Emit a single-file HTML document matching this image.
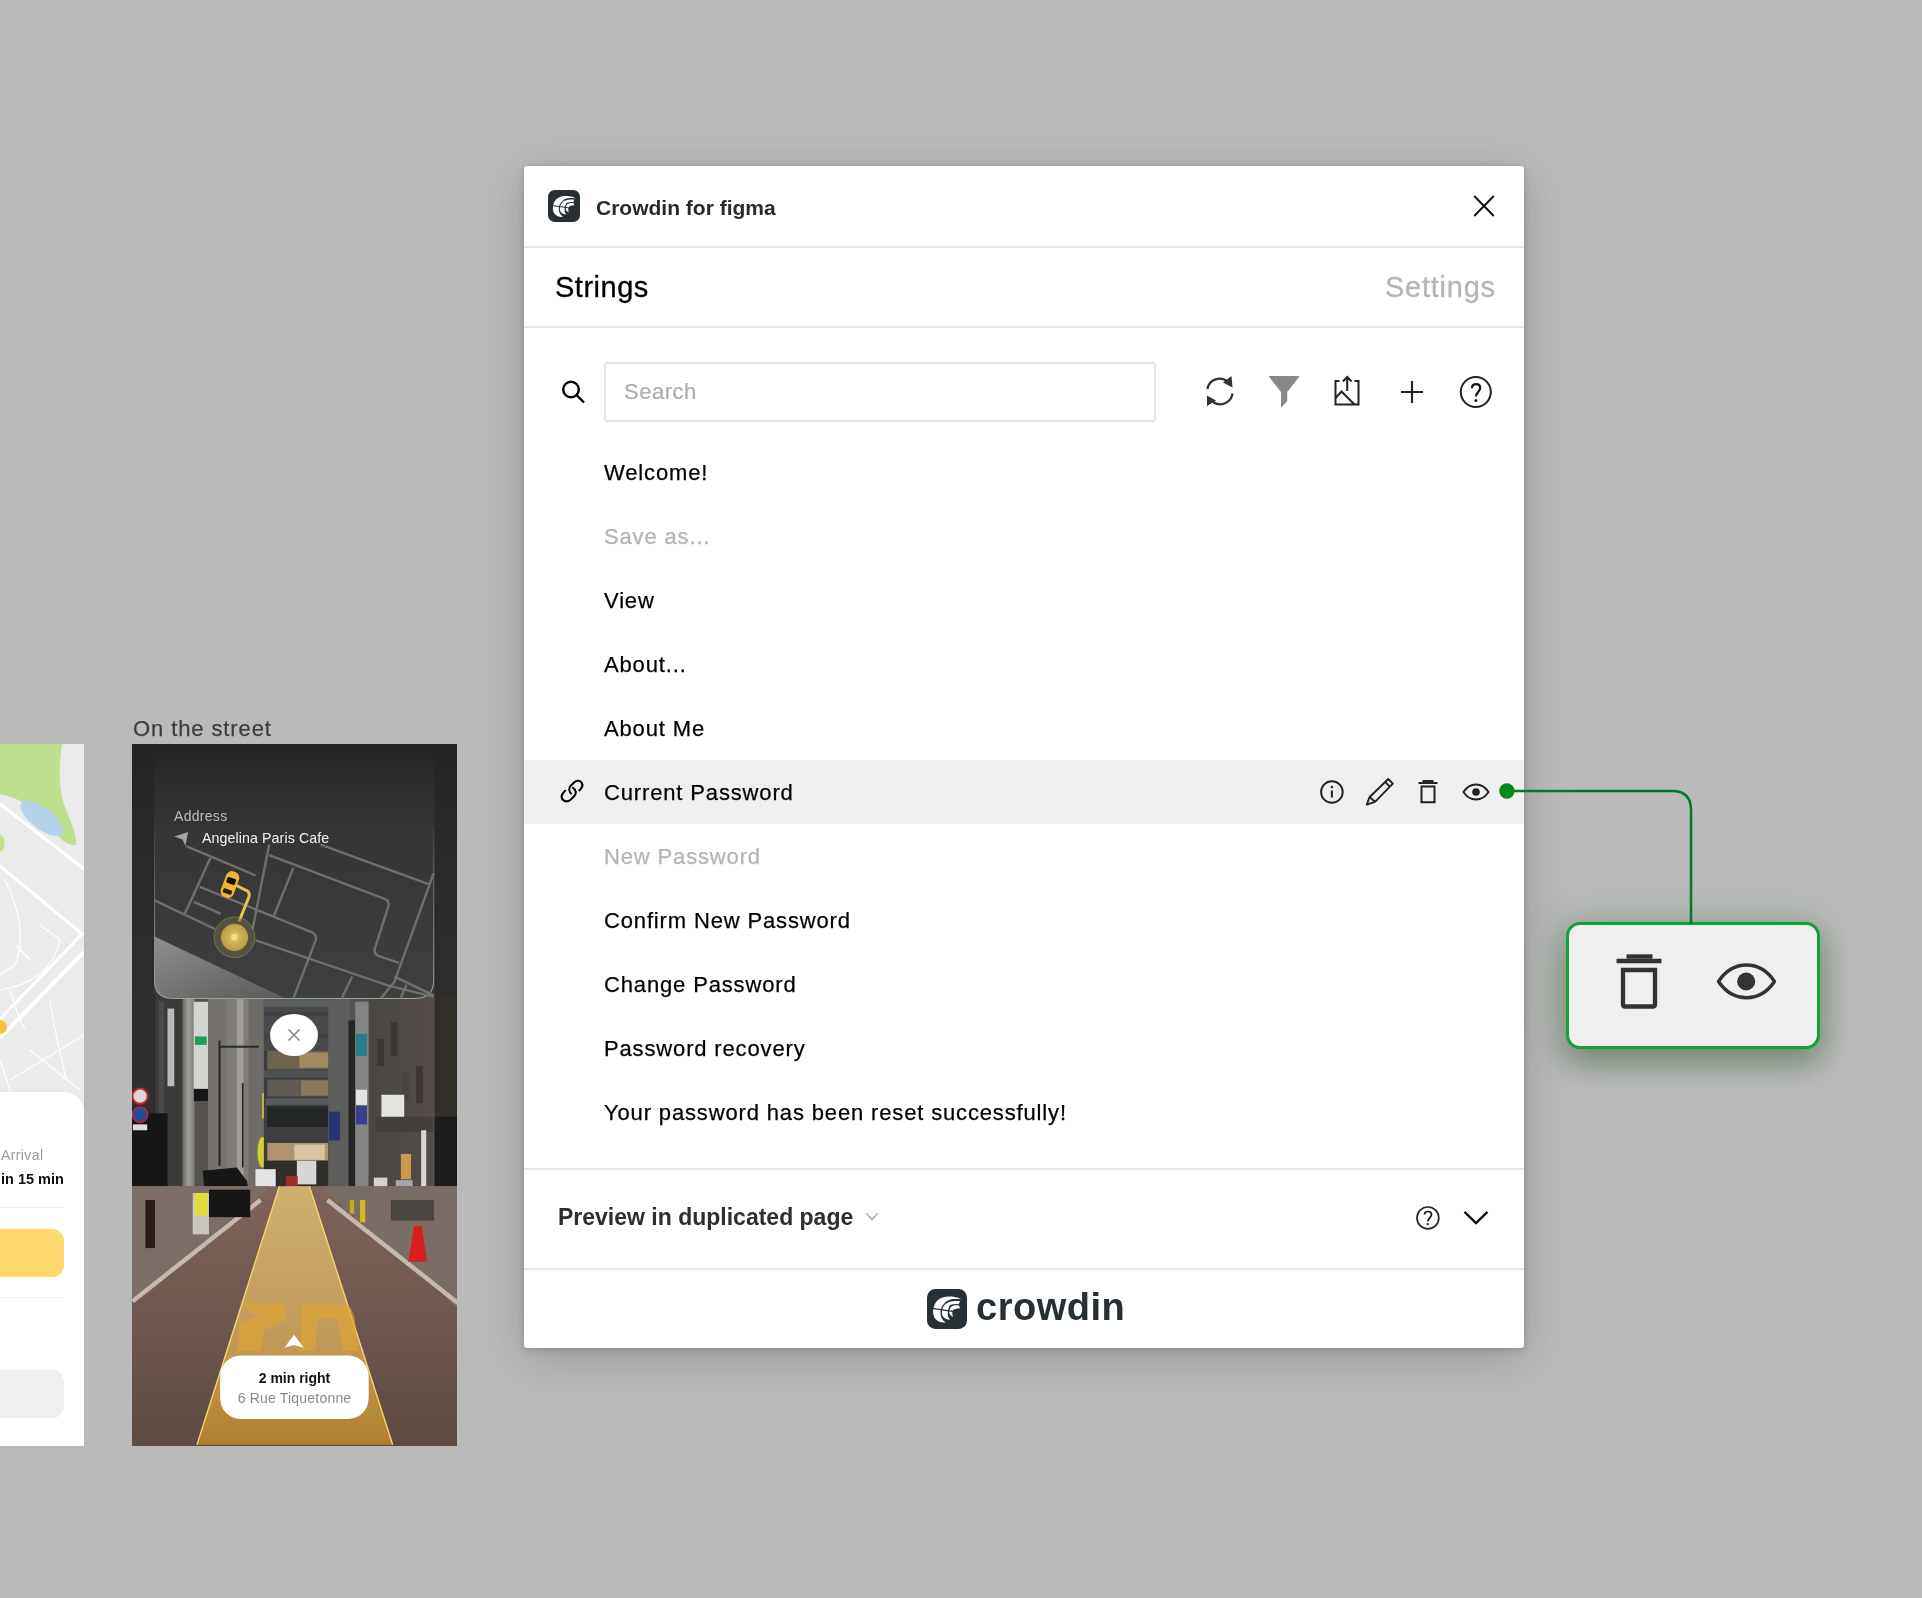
<!DOCTYPE html>
<html><head><meta charset="utf-8">
<style>
*{margin:0;padding:0;box-sizing:border-box}
html,body{width:1922px;height:1598px;overflow:hidden;background:#bababa;font-family:"Liberation Sans",sans-serif;-webkit-font-smoothing:antialiased}
.t{will-change:transform}
.abs{position:absolute}
#panel{position:absolute;left:524px;top:166px;width:1000px;height:1182px;background:#fff;border-radius:3px;box-shadow:0 2px 8px rgba(0,0,0,.16),0 10px 50px rgba(0,0,0,.18),0 0 2px rgba(0,0,0,.1);overflow:hidden}
.hdiv{position:absolute;left:0;width:1000px;height:2px;background:#e6e6e6}
.t{position:absolute;white-space:nowrap;line-height:1}
.row{position:absolute;left:80px;font-size:22px;letter-spacing:.85px;color:#000;-webkit-text-stroke:.25px #000}
.gray{color:#b3b3b3;-webkit-text-stroke:.25px #b3b3b3}
svg{position:absolute;overflow:visible}
</style></head>
<body>
<svg width="0" height="0" style="position:absolute">
  <defs>
    <symbol id="logo" viewBox="0 0 40 40">
      <rect x="0" y="0" width="40" height="40" rx="8.5" fill="#263035"/>
      <path fill="#fff" d="M34.6,10.3 C28,6.5 14,6 9,13.2 C5.5,18 5,26 8.5,30.1 C11,33 15,34 18.6,33.5 C15,31 13.2,27 13.5,24.5 C13.5,20 14.5,16 20.3,11.8 C25,9.5 30,10 34.6,10.3 Z"/>
      <path fill="#fff" d="M33,12.3 C28,11.8 22,11.5 17.5,16 C14.8,19 14.5,23.5 15.2,25.9 C16,28.5 19,30.5 23.1,30.7 C21.5,29 20.5,27 20.8,25.9 C20.5,22 21.5,18 23.1,16.1 C26,15 29,15 31.8,15.2 Z"/>
      <path fill="#fff" d="M31.8,16.3 C28,16 25,16.5 23.5,18.5 C21.8,21 21.8,24 23,25.5 C23.8,26.8 25,27.5 25.9,27.9 C25.3,25.5 25,23.5 25.6,22.5 C26.2,20.5 28,19.5 33,19.2 Z"/>
      <path stroke="#263035" stroke-width="1.3" d="M5,19.3 L27,22.6"/>
    </symbol>
  </defs>
</svg>

<!-- ============ left partial phone ============ -->
<div class="abs" id="leftphone" style="left:0;top:744px;width:84px;height:702px;background:#ebebeb;overflow:hidden">
  <svg width="84" height="702" style="left:0;top:0">
    <g transform="translate(0,-744)">
      <!-- park -->
      <path fill="#bfe08d" d="M0,744 L62,744 C58,770 59,795 67,812 C73,826 77,838 76,845 C70,846 64,842 60,838 C55,832 45,815 30,806 C20,800 10,796 0,794 Z"/>
      <path fill="#bfe08d" d="M0,835 C4,836 6,842 3,850 L0,852 Z"/>
      <!-- lake -->
      <ellipse cx="42" cy="818.5" rx="26" ry="10.5" transform="rotate(37 42 818.5)" fill="#b7d3ea"/>
      <!-- roads -->
      <g stroke="#fff" fill="none">
        <path stroke-width="3.2" d="M0,804 L84,869"/>
        <path stroke-width="3.2" d="M0,866 L82,934 L0,1019"/>
        <path stroke-width="4" d="M84,952 L0,1038"/>
        <path stroke-width="1.2" d="M5,880 C20,910 25,940 15,965 L0,975 M15,945 L30,960 M40,925 L60,940 C55,965 35,985 0,990 M10,990 C15,1010 20,1020 25,1030 M50,1000 C52,1020 60,1050 66,1080 M10,1080 L84,1035 M30,1050 L80,1090 M0,1060 L10,1090"/>
      </g>
      <circle cx="0" cy="1027" r="7" fill="#f7c23a"/>
    </g>
  </svg>
  <div class="abs" style="left:-40px;top:348px;width:124px;height:354px;background:#fff;border-radius:0 20px 0 0"></div>
  <div class="t" style="left:1px;top:404px;font-size:14px;color:#9a9a9a;letter-spacing:.4px">Arrival</div>
  <div class="t" style="left:1px;top:428px;font-size:14.5px;font-weight:bold;color:#111">in 15 min</div>
  <div class="abs" style="left:0;top:463px;width:64px;height:1px;background:#eee"></div>
  <div class="abs" style="left:-20px;top:485px;width:84px;height:48px;background:#fdd86a;border-radius:12px"></div>
  <div class="abs" style="left:0;top:553px;width:64px;height:1px;background:#eee"></div>
  <div class="abs" style="left:-20px;top:626px;width:84px;height:48px;background:#efefef;border-radius:12px"></div>
</div>

<!-- ============ on the street ============ -->
<div class="t" style="left:133px;top:718px;font-size:22px;color:#3d3d3d;letter-spacing:.9px;-webkit-text-stroke:.25px #3d3d3d">On the street</div>
<div class="abs" id="phone" style="left:132px;top:744px;width:325px;height:702px;background:#2a2a29;overflow:hidden">
<svg width="325" height="702" style="left:0;top:0" viewBox="0 0 325 702">
  <defs>
    <linearGradient id="topg" gradientUnits="userSpaceOnUse" x1="0" y1="0" x2="0" y2="260">
      <stop offset="0" stop-color="#222221"/><stop offset=".2" stop-color="#2b2b2a"/><stop offset=".5" stop-color="#343434"/><stop offset="1" stop-color="#3a3a39"/>
    </linearGradient>
    <linearGradient id="cardlite" x1="0" y1="0" x2="1" y2="1">
      <stop offset="0" stop-color="#8e8e8c"/><stop offset="1" stop-color="#5a5a59"/>
    </linearGradient>
    <linearGradient id="lconc" x1="0" y1="0" x2="1" y2="0">
      <stop offset="0" stop-color="#6f6c68"/><stop offset=".5" stop-color="#a09d99"/><stop offset="1" stop-color="#7f7c78"/>
    </linearGradient>
    <linearGradient id="rbld" x1="0" y1="0" x2="1" y2="0">
      <stop offset="0" stop-color="#4b4743"/><stop offset="1" stop-color="#554d48"/>
    </linearGradient>
    <linearGradient id="brick" x1="0" y1="0" x2="0" y2="1">
      <stop offset="0" stop-color="#7f645b"/><stop offset="1" stop-color="#5d4a41"/>
    </linearGradient>
    <linearGradient id="ypath" x1="0" y1="0" x2="0" y2="1">
      <stop offset="0" stop-color="#cdb06e"/><stop offset=".45" stop-color="#c4a060"/><stop offset=".7" stop-color="#c0954c"/><stop offset="1" stop-color="#af7f2c"/>
    </linearGradient>
    <linearGradient id="cardfill" gradientUnits="userSpaceOnUse" x1="0" y1="-650" x2="0" y2="1050">
      <stop offset="0" stop-color="#3a3a39" stop-opacity="0"/><stop offset=".45" stop-color="#3a3a3a" stop-opacity=".6"/><stop offset="1" stop-color="#3e3f3f" stop-opacity=".95"/>
    </linearGradient>
    <linearGradient id="cardborder" gradientUnits="userSpaceOnUse" x1="0" y1="-180" x2="0" y2="1050">
      <stop offset="0" stop-color="#888" stop-opacity="0"/><stop offset=".5" stop-color="#8a8a8a" stop-opacity=".7"/><stop offset="1" stop-color="#a0a0a0" stop-opacity="1"/>
    </linearGradient>
    <filter id="soft" x="-2%" y="-2%" width="104%" height="104%"><feGaussianBlur stdDeviation="4"/></filter>
    <radialGradient id="beacon" cx=".5" cy=".5" r=".5">
      <stop offset="0" stop-color="#e0c66a"/><stop offset="1" stop-color="#b99c45"/>
    </radialGradient>
  </defs>
  <rect width="325" height="260" fill="url(#topg)"/><rect x="0" y="0" width="22" height="260" fill="#252524" opacity=".6"/><rect x="303" y="0" width="22" height="260" fill="#242423" opacity=".6"/>

  <!-- ===== street scene (zoom coords region [132,995] scale 5.914) ===== -->
  <g transform="translate(0,251) scale(0.16909)" filter="url(#soft)">
    <rect x="0" y="0" width="1922" height="1212" fill="#55524f"/>
    <!-- far left dark building -->
    <rect x="0" y="0" width="200" height="1212" fill="#2f2f2e"/>
    <rect x="140" y="0" width="160" height="1212" fill="#3b3b3a"/><rect x="160" y="40" width="30" height="660" fill="#4c4c4b"/>
    <rect x="0" y="700" width="210" height="512" fill="#141414"/>
    <!-- traffic signs -->
    <circle cx="48" cy="598" r="45" fill="#d8d8d8" stroke="#c0282d" stroke-width="12"/>
    <circle cx="48" cy="708" r="45" fill="#1f4f9a" stroke="#b8262c" stroke-width="10"/>
    <rect x="5" y="765" width="85" height="35" fill="#ddd"/>
    <!-- concrete column -->
    <rect x="300" y="0" width="70" height="1212" fill="url(#lconc)"/>
    <rect x="210" y="80" width="40" height="460" fill="#b9bdb9"/>
    <!-- white sign -->
    <rect x="365" y="40" width="85" height="590" fill="#d4d4d2"/>
    <rect x="372" y="245" width="70" height="50" fill="#22a05a"/>
    <rect x="365" y="555" width="85" height="75" fill="#121212"/>
    <!-- mid facade -->
    <rect x="450" y="0" width="120" height="1212" fill="#75726e"/>
    <rect x="560" y="0" width="230" height="1212" fill="#7e7b77"/>
    <rect x="620" y="0" width="40" height="1212" fill="#a19e9a"/>
    <rect x="690" y="0" width="90" height="1212" fill="#6f6c69"/>
    <rect x="512" y="270" width="12" height="740" fill="#262626"/>
    <rect x="650" y="520" width="10" height="500" fill="#2a2a2a"/>
    <rect x="520" y="300" width="230" height="12" fill="#2c2c2c"/>
    <!-- yellow vertical signs -->
    <rect x="770" y="580" width="30" height="150" fill="#d9c23a"/>
    <ellipse cx="772" cy="930" rx="30" ry="90" fill="#d0d22c"/>
    <!-- central building -->
    <rect x="780" y="0" width="400" height="1212" fill="#3b3d3f"/>
    <rect x="780" y="0" width="400" height="330" fill="#46494c"/><rect x="780" y="0" width="400" height="70" fill="#5c5f62"/><rect x="780" y="100" width="400" height="25" fill="#3f4143"/><rect x="780" y="230" width="400" height="25" fill="#3f4143"/>
    <rect x="800" y="330" width="370" height="110" fill="#6d6250"/>
    <rect x="990" y="340" width="180" height="90" fill="#a08a62"/>
    <rect x="780" y="445" width="400" height="45" fill="#4f5153"/>
    <rect x="800" y="500" width="370" height="100" fill="#5d5a52"/>
    <rect x="1000" y="505" width="160" height="90" fill="#8a7a5c"/>
    <rect x="790" y="610" width="390" height="40" fill="#585a5c"/>
    <rect x="800" y="660" width="370" height="120" fill="#242628"/>
    <rect x="790" y="790" width="390" height="70" fill="#3c3e40"/>
    <rect x="800" y="875" width="360" height="105" fill="#b09372"/>
    <rect x="960" y="885" width="180" height="90" fill="#d7c4a2"/>
    <rect x="780" y="980" width="400" height="160" fill="#2e2d2b"/>
    <!-- right-center -->
    <rect x="1160" y="0" width="130" height="1212" fill="#5d5d5c"/>
    <rect x="1165" y="690" width="65" height="170" fill="#2b3570"/>
    <rect x="1280" y="150" width="40" height="1000" fill="#262626"/>
    <rect x="1320" y="40" width="80" height="1100" fill="#858583"/>
    <rect x="1325" y="230" width="65" height="130" fill="#2c7f86"/>
    <rect x="1325" y="560" width="65" height="90" fill="#e0e2e6"/>
    <rect x="1325" y="655" width="65" height="110" fill="#3a3d90"/>
    <!-- right building -->
    <rect x="1400" y="0" width="400" height="1212" fill="url(#rbld)"/>
    <rect x="1450" y="260" width="40" height="160" fill="#3c3834"/>
    <rect x="1530" y="160" width="40" height="200" fill="#3c3834"/>
    <rect x="1600" y="460" width="40" height="160" fill="#4a4540"/>
    <rect x="1680" y="420" width="40" height="220" fill="#3c3834"/>
    <rect x="1440" y="720" width="340" height="90" fill="#45403c"/>
    <rect x="1475" y="590" width="135" height="130" fill="#e4e4e2"/>
    <rect x="1590" y="940" width="60" height="150" fill="#c89a4c"/>
    <rect x="1430" y="1080" width="80" height="130" fill="#d9d2cc"/>
    <rect x="1560" y="1095" width="100" height="100" fill="#a4a8ac"/>
    <rect x="1710" y="800" width="30" height="412" fill="#d8d8d8"/>
    <rect x="1790" y="0" width="132" height="1212" fill="#302e2c"/>
    <rect x="1790" y="720" width="132" height="492" fill="#1c1b1a"/>
    <!-- vehicles -->
    <rect x="975" y="980" width="115" height="140" fill="#d6d6d6"/>
    <rect x="730" y="1030" width="120" height="130" fill="#e4e4e4"/>
    <rect x="910" y="1070" width="70" height="60" fill="#a22a2a"/>
    <path d="M420,1040 L620,1020 L680,1100 L700,1212 L430,1212 Z" fill="#141414"/>
    <rect x="360" y="1160" width="90" height="52" fill="#e0e03a"/>
  </g>

  <!-- ===== road (zoom coords region [130,1200] scale 5.824) ===== -->
  <g transform="translate(-2,456) scale(0.1717)">
    <rect x="0" y="-80" width="1922" height="1520" fill="url(#brick)"/>
    <!-- sidewalks -->
    <path d="M0,-80 L820,-80 L0,600 Z" fill="#7c6d66"/>
    <path d="M1110,-80 L1922,-80 L1922,640 Z" fill="#7a6d66"/>
    <!-- distant road top dark -->
    <rect x="0" y="-80" width="1922" height="70" fill="#5a514d" opacity=".0"/>
    <!-- white lines -->
    <path d="M15,590 L760,0" stroke="#c4bab2" stroke-width="26"/>
    <path d="M1150,0 L1910,600" stroke="#c4bab2" stroke-width="26"/>
    <!-- left sidewalk items -->
    <rect x="90" y="0" width="55" height="280" fill="#2a1a1a"/>
    <rect x="365" y="-40" width="95" height="240" fill="#c9c6c0"/>
    <rect x="375" y="-40" width="80" height="130" fill="#e0dc40"/>
    <rect x="460" y="-60" width="240" height="160" fill="#161616"/>
    <!-- cone -->
    <path d="M1655,150 L1700,150 L1730,360 L1620,360 Z" fill="#d81f1f"/>
    <rect x="1340" y="0" width="30" height="130" fill="#d8b820"/>
    <rect x="1280" y="0" width="25" height="80" fill="#c8a820"/>
    <rect x="1520" y="0" width="250" height="120" fill="#4a4540"/>
    <!-- yellow path -->
    <path d="M870,-80 L1045,-80 L1530,1425 L390,1425 Z" fill="url(#ypath)"/>
    <path d="M870,-80 L390,1425 M1045,-80 L1530,1425" stroke="#f6d66a" stroke-width="8"/>
    <!-- painted 20 -->
    <path d="M660,600 L880,600 Q920,610 900,700 L780,760 L760,880 L620,880 L640,720 L780,660 L700,660 Z" fill="#e0a434" opacity=".65"/>
    <path d="M1000,610 L1250,610 Q1300,620 1310,700 L1330,880 L1240,880 L1210,690 L1090,690 L1080,880 L990,880 Z" fill="#e0a434" opacity=".65"/>
    <!-- arrow -->
    <path d="M955,785 L1012,860 L955,845 L900,860 Z" fill="#fff"/>
    <!-- bubble -->
    <rect x="525" y="905" width="865" height="370" rx="120" fill="#fff"/>
  </g>

  <!-- ===== map card (zoom coords region [150,840] scale 6.628) ===== -->
  <g transform="translate(18,96) scale(0.15088)">
    <path d="M30,-650 L1880,-650 L1880,930 Q1880,1050 1760,1050 L150,1050 Q30,1050 30,930 Z" fill="url(#cardfill)"/>
    <path d="M30,640 L900,1050 L150,1050 Q30,1050 30,930 Z" fill="url(#cardlite)"/>
    <path d="M30,-180 L30,930 Q30,1050 150,1050 L1760,1050 Q1880,1050 1880,930 L1880,-80" stroke="url(#cardborder)" stroke-width="7" fill="none"/>
    <g stroke="#6f6f6e" stroke-width="16" fill="none" stroke-linejoin="round">
      <path d="M240,40 L700,235"/>
      <path d="M790,100 L1555,390 Q1590,405 1580,440 L1490,720 Q1480,755 1520,770 L1650,815"/>
      <path d="M1130,30 L1855,295"/>
      <path d="M30,400 L430,590"/>
      <path d="M700,665 L1580,965 L1880,1040"/>
      <path d="M330,310 L1070,610 Q1105,625 1100,660 L950,1050"/>
      <path d="M290,410 L470,490"/>
      <path d="M400,120 L230,490"/>
      <path d="M790,30 L680,590"/>
      <path d="M950,185 L820,505"/>
      <path d="M1340,905 L1270,1050"/>
      <path d="M1880,220 L1620,940 L1530,1050"/>
      <path d="M1700,960 L1660,1050"/>
      <path d="M1620,905 L1880,1030"/>
    </g>
    <!-- route -->
    <path d="M570,300 L640,335 Q665,350 655,380 L590,540" stroke="#e6c25a" stroke-width="20" fill="none"/>
    <!-- beacon -->
    <circle cx="560" cy="645" r="135" fill="#6a6445" opacity=".55" stroke="#c4b57a" stroke-width="5"/>
    <circle cx="560" cy="645" r="90" fill="url(#beacon)"/>
    <circle cx="560" cy="645" r="22" fill="#f2dd7a"/>
    <!-- car -->
    <g transform="rotate(20 530 295)">
      <rect x="485" y="205" width="90" height="180" rx="40" fill="#f1b536"/>
      <rect x="500" y="250" width="60" height="40" rx="8" fill="#111"/>
      <rect x="500" y="330" width="60" height="30" rx="8" fill="#222"/>
    </g>
  </g>
  <!-- nav arrow + texts (page->local) -->
  <path d="M42.3,92.5 L56,88 L53.5,102 L50.5,95.5 Z" fill="#a5a5a5"/>
</svg>

  <div class="t" style="left:42px;top:65px;font-size:14px;color:#bdbdbd;letter-spacing:.3px">Address</div>
  <div class="t" style="left:70px;top:87px;font-size:14.2px;color:#f2f2f2;letter-spacing:.1px">Angelina Paris Cafe</div>
  <div class="abs" style="left:138px;top:270px;width:48px;height:42px;border-radius:50%;background:#fff"></div>
  <svg width="325" height="702" style="left:0;top:0"><path d="M156.5,285.5 L167.5,296.5 M167.5,285.5 L156.5,296.5" stroke="#888" stroke-width="1.6"/></svg>
  <div class="t" style="left:0;width:325px;text-align:center;top:627px;font-size:14px;font-weight:bold;color:#111">2 min right</div>
  <div class="t" style="left:0;width:325px;text-align:center;top:647px;font-size:14px;color:#8a8a8a;letter-spacing:.2px">6 Rue Tiquetonne</div>
</div>

<!-- ============ panel ============ -->
<div id="panel">
  <svg width="32" height="32" style="left:24px;top:24px"><use href="#logo" width="32" height="32"/></svg>
  <div class="t" style="left:72px;top:31px;font-size:21px;font-weight:bold;color:#2a2a2a">Crowdin for figma</div>
  <div class="hdiv" style="top:80px"></div>
  <div class="t" style="left:31px;top:107px;font-size:29px;color:#000;letter-spacing:.5px;-webkit-text-stroke:.3px #000">Strings</div>
  <div class="t" style="right:28.5px;top:107px;font-size:29px;color:#b5b5b5;letter-spacing:.75px;-webkit-text-stroke:.3px #b5b5b5">Settings</div>
  <div class="hdiv" style="top:160px"></div>
  <!-- search -->
  <div class="abs" style="left:80px;top:196px;width:552px;height:60px;border:2px solid #e3e3e3;border-radius:3px"></div>
  <div class="t" style="left:100px;top:215px;font-size:22px;color:#ababab;letter-spacing:.5px;-webkit-text-stroke:.2px #ababab">Search</div>
  <!-- list -->
  <div class="abs" style="left:0;top:594px;width:1000px;height:64px;background:#efefef"></div>
  <div class="t row" style="top:296px">Welcome!</div>
  <div class="t row gray" style="top:360px">Save as...</div>
  <div class="t row" style="top:424px">View</div>
  <div class="t row" style="top:488px">About...</div>
  <div class="t row" style="top:552px">About Me</div>
  <div class="t row" style="top:616px">Current Password</div>
  <div class="t row gray" style="top:680px">New Password</div>
  <div class="t row" style="top:744px">Confirm New Password</div>
  <div class="t row" style="top:808px">Change Password</div>
  <div class="t row" style="top:872px">Password recovery</div>
  <div class="t row" style="top:936px">Your password has been reset successfully!</div>
  <div class="t row gray" style="top:1000px">Sorry!</div>
  <div class="abs" style="left:0;top:1002px;width:1000px;height:100px;background:#fff"></div>
  <div class="hdiv" style="top:1002px"></div>
  <div class="t" style="left:34px;top:1040px;font-size:23px;font-weight:bold;color:#2e2e2e">Preview in duplicated page</div>
  <div class="hdiv" style="top:1102px"></div>
  <svg width="40" height="40" style="left:403px;top:1123px"><use href="#logo" width="40" height="40"/></svg>
  <div class="t" style="left:452px;top:1122px;font-size:38px;font-weight:bold;color:#263035;letter-spacing:.5px">crowdin</div>
</div>

<!-- ============ icon overlay ============ -->
<svg width="1922" height="1598" style="left:0;top:0" fill="none" stroke-linecap="butt">
  <!-- close X -->
  <path d="M1474.2,196 L1493.8,216 M1493.8,196 L1474.2,216" stroke="#111" stroke-width="1.9"/>
  <!-- search icon -->
  <circle cx="571" cy="389.5" r="7.8" stroke="#000" stroke-width="2.4"/>
  <path d="M576.5,395 L584,402.5" stroke="#000" stroke-width="2.4"/>
  <!-- refresh -->
  <path d="M1207.3,389 A12.5,12.5 0 0 1 1228,382" stroke="#333" stroke-width="2.2"/>
  <path d="M1223,382.5 L1231.5,376 L1232.5,387.5 Z" fill="#333"/>
  <path d="M1232.5,393.5 A12.5,12.5 0 0 1 1213,402" stroke="#333" stroke-width="2.2"/>
  <path d="M1207,395.5 L1207,406 L1216,400.5 Z" fill="#333"/>
  <!-- filter -->
  <path d="M1268.5,376 L1299.7,376 L1287.2,392 L1287.2,401 L1281,407.8 L1281,392 Z" fill="#888"/>
  <!-- upload image -->
  <path d="M1339.5,381 L1335.5,381 L1335.5,404.5 L1358.5,404.5 L1358.5,381 L1354.5,381" stroke="#222" stroke-width="2"/>
  <path d="M1347.2,391 L1347.2,377 M1342.8,381.5 L1347.2,377 L1351.6,381.5" stroke="#222" stroke-width="2"/>
  <path d="M1335.5,398 L1341.5,391.5 L1354.5,404.5" stroke="#222" stroke-width="2"/>
  <!-- plus -->
  <path d="M1401,392 L1423,392 M1412,381 L1412,403" stroke="#222" stroke-width="2.1"/>
  <!-- help -->
  <circle cx="1475.8" cy="392" r="15" stroke="#222" stroke-width="2"/>
  <path d="M1472,388.2 C1472,385.4 1473.8,384.2 1476.2,384.2 C1478.8,384.2 1480.2,386 1480.2,388 C1480.2,391 1476.4,392 1476,396.4" stroke="#111" stroke-width="2.2"/>
  <circle cx="1475.9" cy="400.6" r="1.5" fill="#111"/>

  <!-- link icon -->
  <g stroke="#000" stroke-width="2.1" stroke-linecap="round">
    <path d="M571,793.4 C568.8,791.3 568.6,788 571,785.4 L574.6,782 C577.2,779.9 580.4,780.4 581.9,783 C583,785.4 582.2,787.9 579.4,790.4"/>
    <path d="M565.2,790.8 L563.2,792.9 C560.8,795.6 561.3,798.9 563.7,800.5 C566.1,801.9 569,801.5 571,799.4 L574.3,796 C576.6,793.4 576.3,790.1 573,787.9"/>
  </g>
  <!-- info -->
  <circle cx="1331.9" cy="792" r="10.8" stroke="#222" stroke-width="1.9"/>
  <path d="M1331.9,790.5 L1331.9,797.5" stroke="#222" stroke-width="2"/>
  <circle cx="1331.9" cy="787" r="1.2" fill="#222"/>
  <!-- pencil -->
  <g stroke="#222" stroke-width="1.9" stroke-linejoin="round">
    <path d="M1366.8,804.6 L1369.6,797 L1388.3,779 L1392.8,783.6 L1375,801.8 Z"/>
    <path d="M1369.6,797 L1375,801.8 M1385.3,782.1 L1389.8,786.6"/>
  </g>
  <!-- trash small -->
  <path d="M1422.5,781 L1433.5,781" stroke="#222" stroke-width="2"/>
  <path d="M1418.5,783 L1437.5,783" stroke="#222" stroke-width="2"/>
  <path d="M1421.5,786.5 L1421.5,802.3 L1434.5,802.3 L1434.5,786.5 Z" stroke="#222" stroke-width="2"/>
  <!-- eye small -->
  <path d="M1463.5,792 C1470,782 1482,782 1488.5,792 C1482,802 1470,802 1463.5,792 Z" stroke="#222" stroke-width="1.9"/>
  <circle cx="1476" cy="792" r="3.8" fill="#222"/>

  <!-- footer help -->
  <circle cx="1427.9" cy="1217.9" r="10.9" stroke="#222" stroke-width="1.7"/>
  <path d="M1424.5,1214.5 C1424.5,1212.5 1426,1211.5 1428,1211.5 C1430,1211.5 1431.5,1213 1431.5,1214.8 C1431.5,1217.5 1428,1218 1427.8,1221.5" stroke="#111" stroke-width="1.7"/>
  <circle cx="1427.7" cy="1224.2" r="1.1" fill="#111"/>
  <!-- footer chevron -->
  <path d="M1464.5,1211.8 L1476,1223 L1487.5,1211.8" stroke="#111" stroke-width="2.4"/>
  <!-- small chevron next to preview -->
  <path d="M866.5,1213.5 L872,1219.5 L877.5,1213.5" stroke="#b0b0b0" stroke-width="1.6"/>
</svg>

<!-- ============ green connector ============ -->
<div class="abs" style="left:1566px;top:922px;width:254px;height:127px;border-radius:14px;background:#efefef;border:3.6px solid #12a03a;box-shadow:0 0 40px 6px rgba(40,110,40,.16),0 14px 30px rgba(20,60,20,.38)"></div>
<svg width="1922" height="1598" style="left:0;top:0" fill="none">
  <path d="M1507,791 L1672,791 Q1691,791 1691,810 L1691,924" stroke="#05792a" stroke-width="2.6"/>
  <circle cx="1506.9" cy="791" r="7.7" fill="#038a1c"/>
  <!-- big trash -->
  <path d="M1626.5,956.5 L1652.5,956.5" stroke="#333" stroke-width="4.4"/>
  <path d="M1616.5,961 L1661.5,961" stroke="#333" stroke-width="4.4"/>
  <path d="M1623,970 L1623,1004.5 Q1623,1006.5 1625,1006.5 L1653,1006.5 Q1655,1006.5 1655,1004.5 L1655,970 Z" stroke="#333" stroke-width="4.3"/>
  <!-- big eye -->
  <path d="M1718.5,981.5 C1733,959.5 1760,959.5 1774.5,981.5 C1760,1003 1733,1003 1718.5,981.5 Z" stroke="#333" stroke-width="3.5" stroke-linejoin="round"/>
  <circle cx="1746.2" cy="981.5" r="9" fill="#333"/>
</svg>

</body></html>
